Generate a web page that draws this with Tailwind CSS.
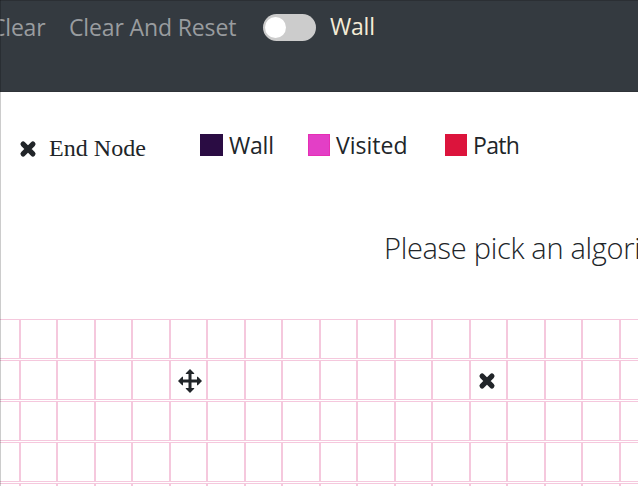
<!DOCTYPE html>
<html lang="en">
<head>
<meta charset="utf-8">
<title>Pathfinding Visualizer</title>
<script src="https://cdn.jsdelivr.net/npm/@tailwindcss/browser@4"></script>
</head>
<body class="relative h-[486px] w-[638px] overflow-hidden bg-white font-['Open_Sans','Noto_Sans',sans-serif] text-[#212529]">
<nav class="flex h-[92px] items-start border-t border-b border-t-[#2b2f34] border-b-[#2f3338] bg-[#343a40] text-[23px] leading-[34px] whitespace-nowrap text-[#999c9f]">
  <a class="-ml-[9px] w-[78px] pt-[9px] tracking-[-0.2px]">Clear</a>
  <a class="w-[194px] pt-[9px] tracking-[-0.13px]">Clear And Reset</a>
  <span class="mt-[13px] flex h-[27px] w-[53px] items-center rounded-full bg-[#ccc] pl-[2px]"><span class="size-[21px] rounded-full bg-white"></span></span>
  <span class="ml-[14px] pt-[8px] tracking-[-0.2px] text-[#f5ecd7]">Wall</span>
</nav>
<section class="flex h-[108px] items-start pt-[42px] text-[23px] leading-[22px] whitespace-nowrap">
  <div class="flex w-[200px] pt-[3px] pl-[19px] font-['Liberation_Serif',serif] text-[24px]">
    <svg class="mt-[3px] mr-[12px] size-[18px]" viewBox="0 0 18 18"><path d="M4.1 4.1 13.9 13.9M13.9 4.1 4.1 13.9" stroke="#212529" stroke-width="5.2" stroke-linecap="round"/></svg>
    <span class="tracking-[0.05px]">End Node</span>
  </div>
  <div class="flex w-[108px] gap-[6px]"><i class="h-[22px] w-[23px] bg-[#2a0c43]"></i><span class="tracking-[-0.2px]">Wall</span></div>
  <div class="flex w-[137px] gap-[6px]"><i class="size-[22px] border border-[#e62eb4] bg-[#e33fc6]"></i><span class="tracking-[0.02px]">Visited</span></div>
  <div class="flex gap-[6px]"><i class="size-[22px] bg-[#dc143c]"></i><span class="tracking-[-0.65px]">Path</span></div>
</section>
<h1 class="h-[119px] pt-[28px] pl-[384px] text-[29px] leading-[40px] font-light tracking-[-0.3px] whitespace-nowrap">Please pick an algorithm to visualize!</h1>
<main id="grid" class="-ml-[18px] flex w-[712px] flex-col gap-px"></main>
<template id="move"><svg class="ml-[2px] mt-px size-[24px] shrink-0" viewBox="0 0 24 24" fill="#212529"><path d="M12 0 16.2 4.2V5H13.5V10.5H19V7.8H19.8L24 12 19.8 16.2H19V13.5H13.5V19H16.2V19.8L12 24 7.8 19.8V19H10.5V13.5H5V16.2H4.2L0 12 4.2 7.8H5V10.5H10.5V5H7.8V4.2Z"/></svg></template>
<template id="end"><svg class="mt-[2px] mr-[3px] size-[18px] shrink-0" viewBox="0 0 18 18"><path d="M4.1 4.1 13.9 13.9M13.9 4.1 4.1 13.9" stroke="#212529" stroke-width="5.2" stroke-linecap="round"/></svg></template>
<div class="pointer-events-none absolute inset-y-0 left-0 w-px bg-black/20"></div>
<script>
const grid = document.getElementById('grid');
for (let r = 0; r < 5; r++) {
  const row = document.createElement('div');
  row.className = 'flex h-[40px]';
  for (let c = 0; c < 18; c++) {
    const cell = document.createElement('div');
    cell.className = (c % 2 ? 'w-[37px]' : 'w-[38px]') + ' flex shrink-0 items-center justify-center border border-[#f5c8dd]';
    if (r === 1 && c === 5) { cell.append(document.getElementById('move').content.cloneNode(true)); }
    if (r === 1 && c === 13) { cell.append(document.getElementById('end').content.cloneNode(true)); }
    row.append(cell);
  }
  grid.append(row);
}
</script>
</body>
</html>
